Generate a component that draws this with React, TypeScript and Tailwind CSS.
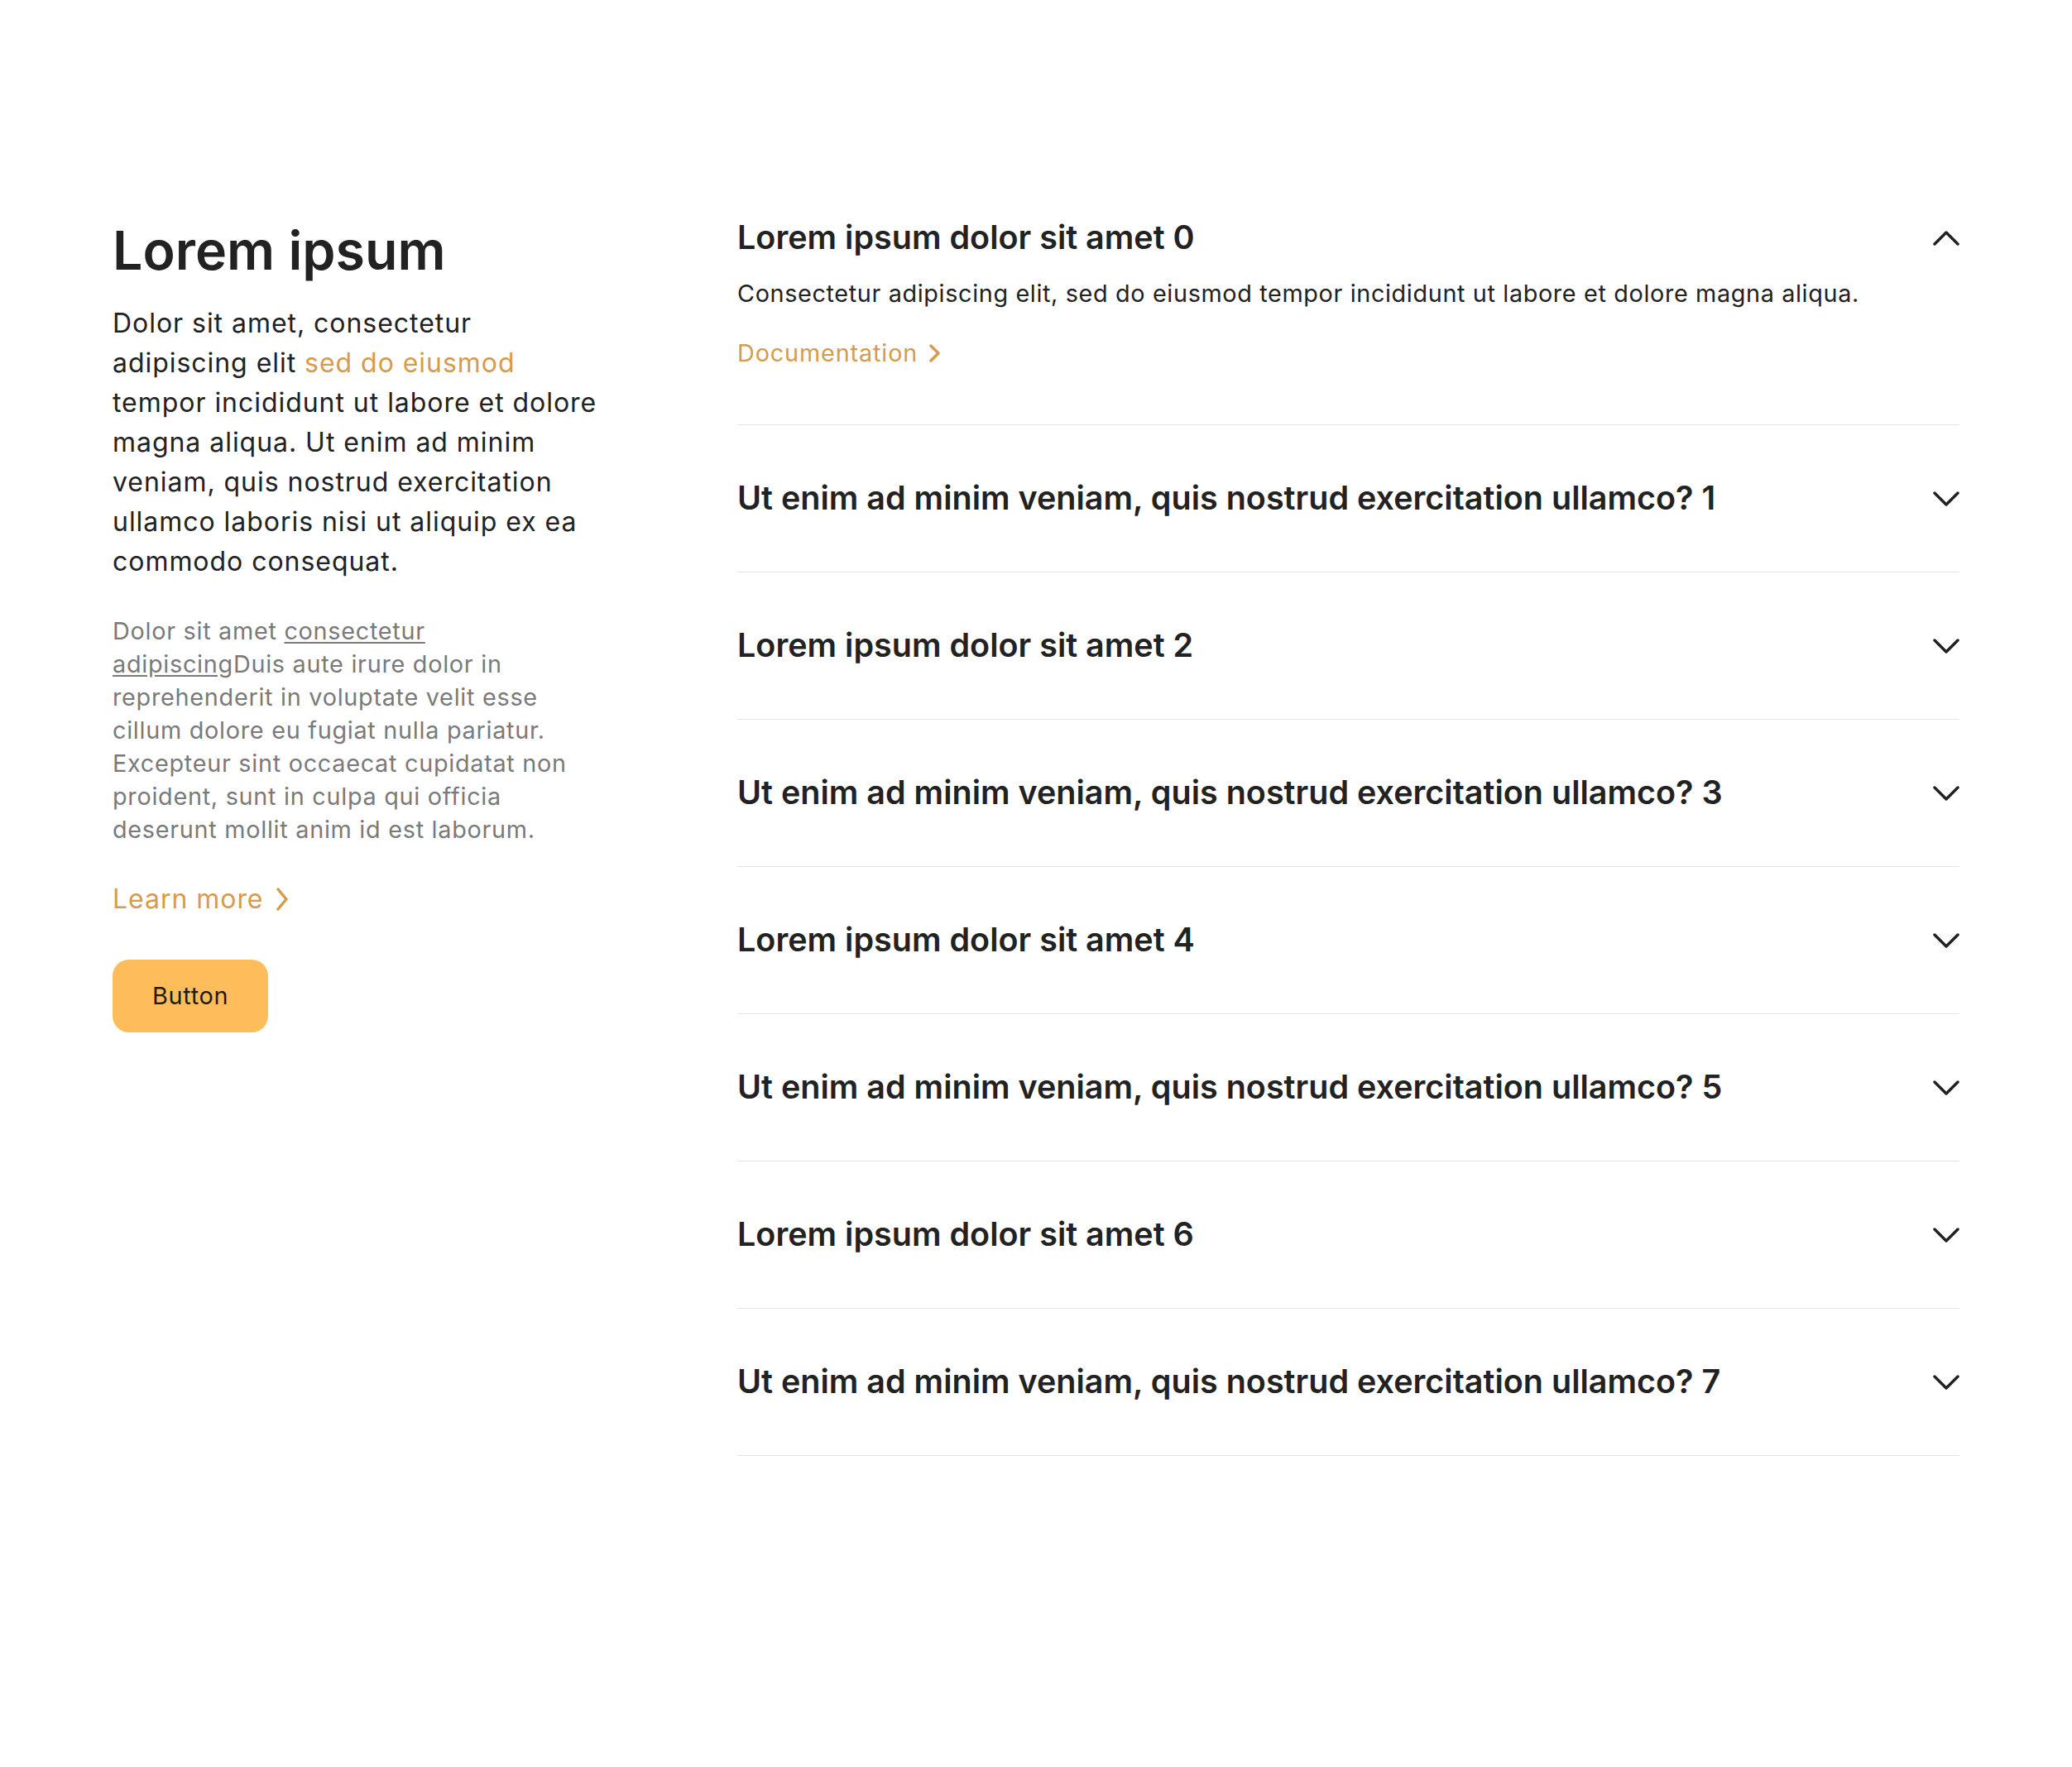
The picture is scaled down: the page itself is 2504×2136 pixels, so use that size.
import React from "react";

const items = [
  "Lorem ipsum dolor sit amet 0",
  "Ut enim ad minim veniam, quis nostrud exercitation ullamco? 1",
  "Lorem ipsum dolor sit amet 2",
  "Ut enim ad minim veniam, quis nostrud exercitation ullamco? 3",
  "Lorem ipsum dolor sit amet 4",
  "Ut enim ad minim veniam, quis nostrud exercitation ullamco? 5",
  "Lorem ipsum dolor sit amet 6",
  "Ut enim ad minim veniam, quis nostrud exercitation ullamco? 7",
];

function Chevron({ up }: { up?: boolean }) {
  return (
    <svg width="32" height="18" viewBox="0 0 32 18" fill="none" className="shrink-0">
      <polyline
        points={up ? "2,16 16,2 30,16" : "2,2 16,16 30,2"}
        stroke="#222222"
        strokeWidth="3.5"
        strokeLinecap="round"
        strokeLinejoin="round"
      />
    </svg>
  );
}

function LinkChevron({ w, h }: { w: number; h: number }) {
  return (
    <svg width={w} height={h} viewBox={`0 0 ${w} ${h}`} fill="none" className="shrink-0">
      <polyline
        points={`2,2 ${w - 2},${h / 2} 2,${h - 2}`}
        stroke="#D69B4C"
        strokeWidth="3.5"
        strokeLinecap="round"
        strokeLinejoin="round"
      />
    </svg>
  );
}

export default function App() {
  return (
    <div className="min-h-[2136px] w-full bg-white px-[136px] pt-[263px] font-['Inter',sans-serif] text-[#222222]">
      <div className="flex">
        <div className="w-[588px] shrink-0">
          <h2 className="text-[64.5px] font-semibold leading-[80px] text-[#222222]">Lorem ipsum</h2>
          <p className="mt-[24px] text-[32px] leading-[48px] tracking-[0.03em] text-[#222222]">
            Dolor sit amet, consectetur adipiscing elit{" "}
            <span className="text-[#D69B4C]">sed do eiusmod</span> tempor incididunt ut labore et dolore magna aliqua.
            Ut enim ad minim veniam, quis nostrud exercitation ullamco laboris nisi ut aliquip ex ea commodo
            consequat.
          </p>
          <p className="mt-[40px] text-[28.8px] leading-[40px] tracking-[0.025em] text-[#7a7a7a]">
            Dolor sit amet <span className="underline underline-offset-[3px]">consectetur adipiscing</span>Duis aute
            irure dolor in reprehenderit in voluptate velit esse cillum dolore eu fugiat nulla pariatur. Excepteur
            sint occaecat cupidatat non proident, sunt in culpa qui officia deserunt mollit anim id est laborum.
          </p>
          <a className="mt-[40px] flex items-center gap-[16px] text-[32px] leading-[48px] tracking-[0.03em] text-[#D69B4C]">
            <span>Learn more</span>
            <LinkChevron w={14} h={28} />
          </a>
          <button className="mt-[49px] rounded-[20px] bg-[#FDBD5B] px-[48px] py-[22px] text-[28.8px] leading-[44px] tracking-[0.025em] text-[#1f1a12]">
            Button
          </button>
        </div>
        <div className="ml-[167px] flex-1">
          {items.map((t, i) =>
            i === 0 ? (
              <div key={i} className="border-b border-[#e5e5e5] pb-[65px]">
                <div className="flex items-center justify-between">
                  <h3 className="text-[39.5px] font-semibold leading-[49px]">{t}</h3>
                  <Chevron up />
                </div>
                <p className="mt-[21px] text-[28.8px] leading-[43px] tracking-[0.022em] text-[#222222]">
                  Consectetur adipiscing elit, sed do eiusmod tempor incididunt ut labore et dolore magna aliqua.
                </p>
                <a className="mt-[29px] flex items-center gap-[14px] text-[28.8px] leading-[43px] tracking-[0.03em] text-[#D69B4C]">
                  <span>Documentation</span>
                  <LinkChevron w={13} h={22} />
                </a>
              </div>
            ) : (
              <div key={i} className="flex items-center justify-between border-b border-[#e5e5e5] py-[64px]">
                <h3 className="text-[39.5px] font-semibold leading-[49px]">{t}</h3>
                <Chevron />
              </div>
            )
          )}
        </div>
      </div>
    </div>
  );
}
